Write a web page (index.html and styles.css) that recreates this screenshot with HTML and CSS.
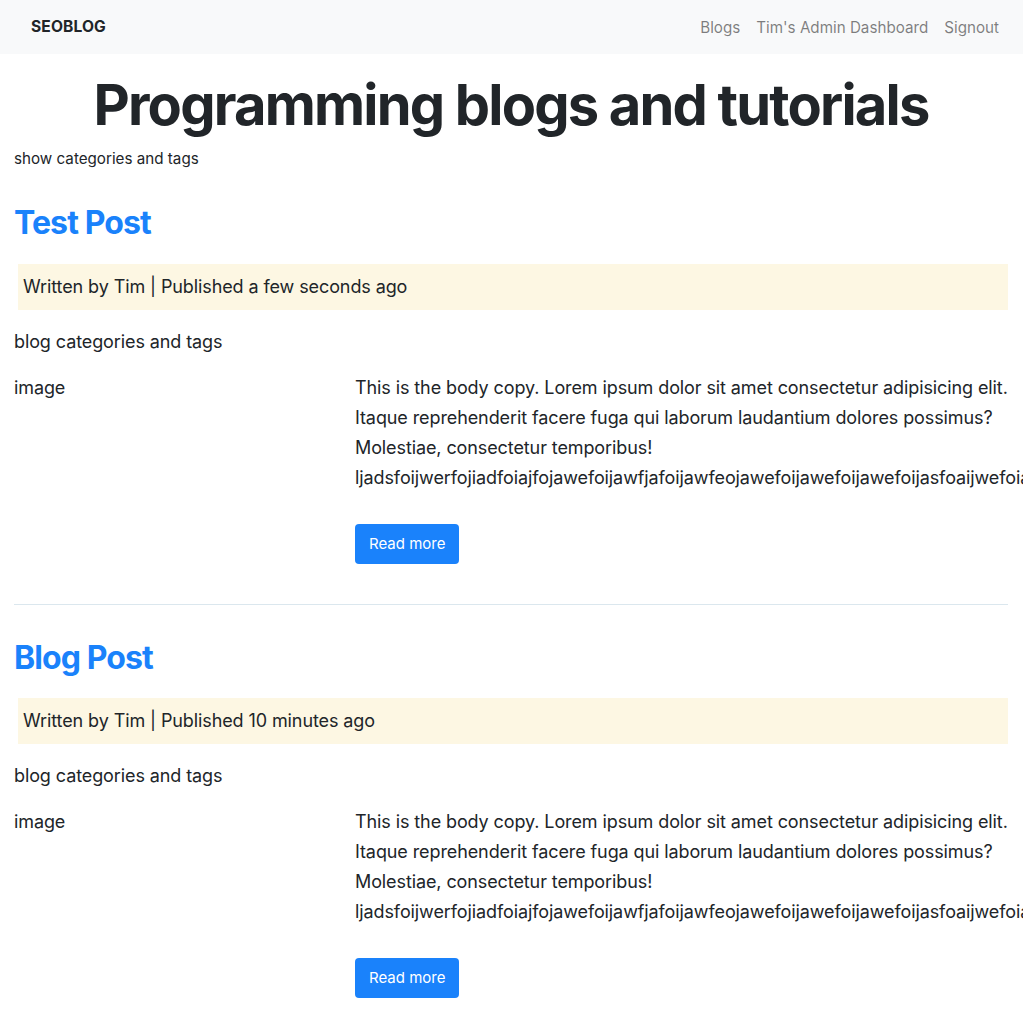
FILE: index.html
```html
<!DOCTYPE html>
<html lang="en">
<head>
<meta charset="utf-8">
<title>SEOBLOG</title>
<link rel="stylesheet" href="styles.css">
</head>
<body>
<nav class="navbar">
  <a class="brand" href="#">SEOBLOG</a>
  <ul class="nav-links">
    <li><a href="#">Blogs</a></li>
    <li><a href="#">Tim's Admin Dashboard</a></li>
    <li><a href="#">Signout</a></li>
  </ul>
</nav>
<main class="container">
  <header class="page-header">
    <h1 class="page-title">Programming blogs and tutorials</h1>
    <p class="cat-note">show categories and tags</p>
  </header>

  <article class="post">
    <h2 class="post-title"><a href="#">Test Post</a></h2>
    <p class="post-meta">Written by Tim | Published a few seconds ago</p>
    <p class="post-cats">blog categories and tags</p>
    <div class="post-row">
      <div class="post-image">image</div>
      <div class="post-body">
        <p class="excerpt">This is the body copy. Lorem ipsum dolor sit amet consectetur adipisicing elit. Itaque reprehenderit facere fuga qui laborum laudantium dolores possimus? Molestiae, consectetur temporibus! ljadsfoijwerfojiadfoiajfojawefoijawfjafoijawfeojawefoijawefoijawefoijasfoaijwefoiajwefoiajwefoiajwefoi</p>
        <a class="btn" href="#">Read more</a>
      </div>
    </div>
    <hr class="divider">
  </article>

  <article class="post">
    <h2 class="post-title"><a href="#">Blog Post</a></h2>
    <p class="post-meta">Written by Tim | Published 10 minutes ago</p>
    <p class="post-cats">blog categories and tags</p>
    <div class="post-row">
      <div class="post-image">image</div>
      <div class="post-body">
        <p class="excerpt">This is the body copy. Lorem ipsum dolor sit amet consectetur adipisicing elit. Itaque reprehenderit facere fuga qui laborum laudantium dolores possimus? Molestiae, consectetur temporibus! ljadsfoijwerfojiadfoiajfojawefoijawfjafoijawfeojawefoijawefoijawefoijasfoaijwefoiajwefoiajwefoiajwefoi</p>
        <a class="btn" href="#">Read more</a>
      </div>
    </div>
    <hr class="divider">
  </article>
</main>
</body>
</html>
```
FILE: styles.css
```css
* { box-sizing: border-box; }
html, body { margin: 0; padding: 0; }
body {
  font-family: Inter, "Noto Sans", "Liberation Sans", sans-serif;
  color: #212529;
  background: #fff;
  font-size: 16px;
  line-height: 1.5;
  overflow-x: hidden;
}
a { text-decoration: none; }

.navbar {
  height: 54px;
  background: #f8f9fa;
  display: flex;
  align-items: center;
  justify-content: space-between;
  padding: 0 24px 0 31px;
}
.brand {
  font-weight: 700;
  font-size: 15.6px;
  color: #212529;
  letter-spacing: 0.1px;
}
.nav-links {
  list-style: none;
  margin: 0;
  padding: 0;
  display: flex;
  gap: 16px;
}
.nav-links a {
  color: rgba(0, 0, 0, 0.5);
  font-size: 15.2px;
}

.container {
  padding: 0 15px 0 14px;
}
.page-header {
  padding-top: 18px;
  padding-bottom: 1px;
}
.page-title {
  margin: 0;
  text-align: center;
  font-size: 56px;
  font-weight: 700;
  line-height: 1.2;
  letter-spacing: -1.8px;
}
.cat-note {
  margin: 9px 0 0;
  font-size: 15.2px;
  line-height: 21px;
}

.post { padding-top: 34px; }
.post-title {
  margin: 0;
  font-size: 32px;
  font-weight: 700;
  line-height: 1.2;
  letter-spacing: -0.9px;
}
.post-title a { color: #1a82fb; }
.post-meta {
  margin: 21px 0 0 4px;
  background: #fdf7e3;
  height: 46px;
  display: flex;
  align-items: center;
  padding-left: 5px;
  font-size: 18px;
  letter-spacing: -0.1px;
}
.post-cats {
  margin: 17px 0 0;
  font-size: 18px;
  letter-spacing: -0.1px;
  line-height: 30px;
}
.post-row {
  display: grid;
  grid-template-columns: 341px 1fr;
  margin: 16px -15px 0 -14px;
}
.post-image {
  padding: 0 14px;
  font-size: 18px;
  letter-spacing: -0.1px;
  line-height: 30px;
}
.post-body {
  padding: 0 14px;
  min-width: 0;
}
.excerpt {
  margin: 0;
  font-size: 18px;
  letter-spacing: -0.1px;
  line-height: 30px;
}
.btn {
  display: inline-block;
  margin-top: 31px;
  background: #1a82fb;
  color: #fff;
  font-size: 15px;
  line-height: 24px;
  padding: 8px 14px;
  border-radius: 4px;
}
.divider {
  margin: 40px 0 0;
  border: 0;
  border-top: 1px solid #dbe7ee;
}
```
